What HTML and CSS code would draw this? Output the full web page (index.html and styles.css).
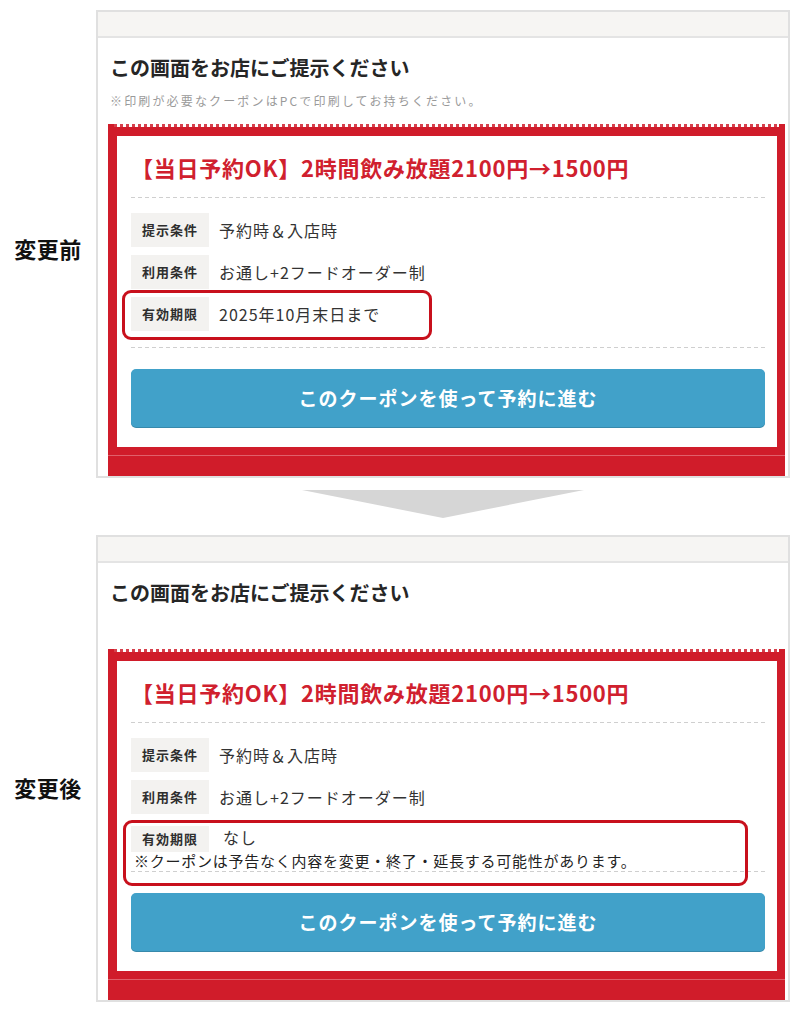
FILE: index.html
```html
<!DOCTYPE html>
<html lang="ja">
<head>
<meta charset="utf-8">
<title>クーポン表示 変更前・変更後</title>
<link rel="stylesheet" href="styles.css">
</head>
<body>
<main class="page">
  <div class="side side--before">変更前</div>
  <section class="panel">
    <div class="panel-bar"></div>
    <h1 class="heading">この画面をお店にご提示ください</h1>
    <p class="sub">※印刷が必要なクーポンはPCで印刷してお持ちください。</p>
    <div class="coupon">
      <div class="coupon-body">
        <h2 class="coupon-title">【当日予約OK】2時間飲み放題2100円→1500円</h2>
        <div class="sep"></div>
        <div class="rows">
          <div class="row"><span class="label">提示条件</span><span class="value">予約時＆入店時</span></div>
          <div class="row"><span class="label">利用条件</span><span class="value">お通し+2フードオーダー制</span></div>
          <div class="row"><span class="label">有効期限</span><span class="value">2025年10月末日まで</span><span class="mark mark--before"></span></div>
        </div>
        <div class="sep sep--end"></div>
        <a class="btn">このクーポンを使って予約に進む</a>
      </div>
    </div>
  </section>

  <div class="side"></div>
  <div class="arrow">
    <svg width="282" height="28" viewBox="0 0 282 28" aria-hidden="true"><polygon points="0,0 282,0 141,28" fill="#d6d6d6"/></svg>
  </div>

  <div class="side side--after">変更後</div>
  <section class="panel">
    <div class="panel-bar"></div>
    <h1 class="heading">この画面をお店にご提示ください</h1>
    <p class="sub"></p>
    <div class="coupon">
      <div class="coupon-body">
        <h2 class="coupon-title">【当日予約OK】2時間飲み放題2100円→1500円</h2>
        <div class="sep"></div>
        <div class="rows">
          <div class="row"><span class="label">提示条件</span><span class="value">予約時＆入店時</span></div>
          <div class="row"><span class="label">利用条件</span><span class="value">お通し+2フードオーダー制</span></div>
          <div class="row row--stack">
            <div class="row-head"><span class="label">有効期限</span><span class="value value--none">なし</span></div>
            <p class="row-note">※クーポンは予告なく内容を変更・終了・延長する可能性があります。</p>
            <span class="mark mark--after"></span>
          </div>
        </div>
        <div class="sep sep--near"></div>
        <a class="btn">このクーポンを使って予約に進む</a>
      </div>
    </div>
  </section>
</main>
</body>
</html>
```

FILE: styles.css
```css
* {
  box-sizing: border-box;
  margin: 0;
  padding: 0;
}

body {
  margin: 0;
  background: #fff;
  font-family: "Noto Sans CJK JP", "Noto Sans", sans-serif;
  color: #333;
}

.page {
  display: grid;
  grid-template-columns: 96px 694px;
  padding-top: 10px;
}

.side {
  font-size: 22px;
  font-weight: 700;
  line-height: 30px;
  letter-spacing: 0.5px;
  text-align: center;
  color: #111;
}

.side--before {
  padding-top: 223px;
}

.side--after {
  padding-top: 237px;
}

.panel {
  border: 2px solid #e0e0e0;
  overflow: hidden;
  background: #fff;
}

.panel-bar {
  height: 26px;
  background: #f6f5f3;
  border-bottom: 2px solid #e4e4e4;
}

.heading {
  padding: 16px 0 0 12px;
  font-size: 20px;
  line-height: 28px;
  font-weight: 700;
  color: #262626;
}

.sub {
  margin-top: 11px;
  height: 16px;
  padding-left: 12px;
  font-size: 12px;
  line-height: 16px;
  letter-spacing: 2.15px;
  color: #9a9a9a;
}

.coupon {
  position: relative;
  margin: 18px 3px 0 10px;
  padding: 9px 8px 29px 9px;
  background: #d01c2a;
}

.coupon::before {
  content: "";
  position: absolute;
  left: 0;
  right: 0;
  top: -3px;
  height: 3px;
  background:
    linear-gradient(#d01c2a, #d01c2a) left top / 6px 100% no-repeat,
    linear-gradient(#d01c2a, #d01c2a) right top / 6px 100% no-repeat,
    repeating-linear-gradient(90deg, #d6404c 0 3px, transparent 3px 6px);
}

.coupon::after {
  content: "";
  position: absolute;
  left: 0;
  right: 0;
  bottom: 20px;
  height: 1px;
  background: #e0606b;
}

.coupon-body {
  background: #fff;
  padding: 16px 12px 20px 14px;
}

.coupon-title {
  font-size: 22px;
  line-height: 30px;
  font-weight: 700;
  letter-spacing: 0.75px;
  color: #d0202e;
  white-space: nowrap;
}

.sep {
  height: 1px;
  margin-top: 15px;
  background: repeating-linear-gradient(90deg, #cfcfcf 0 4px, transparent 4px 7px);
}

.sep--end {
  margin-top: 16px;
}

.sep--near {
  margin-top: 2px;
}

.rows {
  margin-top: 15px;
  display: flex;
  flex-direction: column;
  gap: 8px;
}

.row {
  position: relative;
  display: flex;
  align-items: center;
  height: 34px;
}

.label {
  flex: none;
  width: 78px;
  height: 34px;
  line-height: 34px;
  text-align: center;
  background: #f3f2f0;
  font-size: 13px;
  font-weight: 700;
  letter-spacing: 1px;
  color: #2e2e2e;
}

.value {
  margin-left: 10px;
  font-size: 16px;
  letter-spacing: 1px;
  color: #333;
}

.row--stack {
  display: block;
  height: 47px;
}

.row-head {
  display: flex;
  align-items: flex-start;
}

.row--stack .label {
  height: 26px;
  line-height: 26px;
  margin-top: 4px;
}

.value--none {
  margin-left: 14px;
  margin-top: 2px;
  line-height: 26px;
}

.row-note {
  padding-left: 3px;
  font-size: 15px;
  line-height: 17px;
  letter-spacing: 0.75px;
  color: #222;
  white-space: nowrap;
}

.mark {
  position: absolute;
  border: 3px solid #c8101c;
  border-radius: 9px;
  pointer-events: none;
}

.mark--before {
  left: -9px;
  top: -7px;
  width: 310px;
  height: 50px;
}

.mark--after {
  left: -8px;
  top: -2px;
  width: 625px;
  height: 66px;
}

.btn {
  display: block;
  margin-top: 21px;
  height: 58px;
  line-height: 58px;
  text-align: center;
  background: #41a1c9;
  border-radius: 5px;
  box-shadow: 0 1px 0 #3789ab;
  color: #fff;
  font-size: 19px;
  font-weight: 700;
  letter-spacing: 1px;
  text-decoration: none;
}

.arrow {
  display: flex;
  justify-content: center;
  padding: 12px 0 17px;
}

.arrow svg {
  display: block;
}
```
